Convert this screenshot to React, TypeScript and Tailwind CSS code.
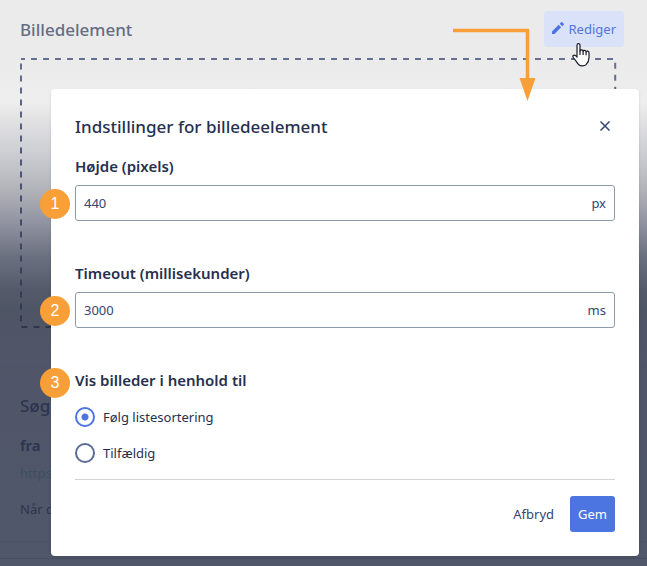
import type { ReactNode } from "react";

function Field({ id, label, value, unit, step }: { id: string; label: string; value: string; unit: string; step: string }) {
  return (
    <div className="relative">
      <label htmlFor={id} className="block text-[15px] font-semibold leading-6">
        {label}
      </label>
      <div className="mt-[7px] flex h-9 items-center rounded-[3px] border border-[#8c9bab] px-2 pt-0.5 text-[13px] text-[#344571]">
        <input id={id} defaultValue={value} className="min-w-0 flex-1 bg-transparent outline-none" />
        <span>{unit}</span>
      </div>
      <Step className="top-[35px]">{step}</Step>
    </div>
  );
}

function Step({ children, className }: { children: ReactNode; className: string }) {
  return (
    <span className={`absolute -left-[35px] flex size-[30px] items-center justify-center rounded-full bg-[#f99f38] font-['Liberation_Sans',sans-serif] text-[16px] font-normal leading-none text-white ${className}`}>
      {children}
    </span>
  );
}

function Choice({ label, checked }: { label: string; checked?: boolean }) {
  return (
    <label className="flex h-9 items-center gap-2 text-[13px]">
      <input
        type="radio"
        name="order"
        defaultChecked={checked}
        className="size-5 appearance-none rounded-full border-2 border-[#5b6c93] checked:border-[#4d75e1] checked:bg-[radial-gradient(circle,#4d75e1_0_3px,transparent_4px)]"
      />
      <span className="pt-0.5">{label}</span>
    </label>
  );
}

export default function App() {
  return (
    <main className="relative min-h-screen overflow-hidden bg-[#50576a] bg-[linear-gradient(#ebebeb_0px,#ebebeb_60px,#eeeeee_102px,#e0e0e2_123px,#cacbd0_157px,#b2b3b9_190px,#9093a0_223px,#6b7080_257px,#545a6a_290px,#4e5565_310px,#505668_350px,#50576a_100%)] font-['Noto_Sans',sans-serif] text-[#26304f]">
      <div className="pl-5 pr-[23px] pt-[11px]">
        <div className="flex h-9 items-center justify-between">
          <h1 className="pt-0.5 text-[17px] font-medium text-[#666d82]">Billedelement</h1>
          <button className="flex h-9 items-center gap-[5px] rounded bg-[#dae2f9] px-2 text-[13px] text-[#4d75e1]">
            <svg viewBox="2 2 20 20" className="mb-0.5 size-3" fill="currentColor">
              <path d="M2 17.800V22h4.200L17.300 10.900 13.100 6.700 2 17.800ZM21.600 6.600a1.200 1.200 0 0 0 0-1.700l-2.500-2.500a1.200 1.200 0 0 0-1.700 0l-2.500 2.500 4.200 4.200 2.500-2.500Z" />
            </svg>
            <span className="pt-0.5">Rediger</span>
          </button>
        </div>
        <div className="mr-2 mt-[11px] h-[270px]">
          <svg className="size-full overflow-visible" fill="none">
            <defs>
              <linearGradient id="dash" x1="0" y1="0" x2="0" y2="270" gradientUnits="userSpaceOnUse">
                <stop stopColor="#66708f" />
                <stop offset=".5" stopColor="#46506f" />
                <stop offset="1" stopColor="#2f364c" />
              </linearGradient>
            </defs>
            <rect x="1" y="1" width="99.700%" height="268" stroke="url(#dash)" strokeWidth="2" strokeDasharray="6 6" strokeDashoffset="2" />
          </svg>
        </div>
      </div>
      <section className="mt-[38px] border-y border-[#4c5366] pb-5 pl-5 text-[#2c3450]">
        <h2 className="pt-[27px] text-[17px] font-medium leading-6">Søg</h2>
        <h3 className="mt-[15px] text-[15px] font-semibold leading-6">fra</h3>
        <p className="mt-1 text-[13px] leading-6 text-[#3c515e]">https://</p>
        <p className="mt-3 text-[13px] leading-6">Når der</p>
      </section>
      <hr className="mt-4 border-[#484f62]" />

      <div role="dialog" aria-labelledby="title" className="absolute left-[51px] right-2 top-[89px] rounded bg-white px-6 pb-6 pt-[25px] shadow-sm">
        <header className="flex h-6 items-center justify-between">
          <h2 id="title" className="pt-0.5 text-[17px] font-medium">Indstillinger for billedeelement</h2>
          <button aria-label="Luk" className="flex size-5 items-center justify-center text-[#344571]">
            <svg viewBox="0 0 10 10" className="size-[10px]" fill="none" stroke="currentColor" strokeWidth="1.500">
              <path d="m.5.5 9 9m0-9-9 9" />
            </svg>
          </button>
        </header>
        <div className="mt-4 flex flex-col gap-10">
          <Field id="height" label="Højde (pixels)" value="440" unit="px" step="1" />
          <Field id="timeout" label="Timeout (millisekunder)" value="3000" unit="ms" step="2" />
          <div role="radiogroup" aria-labelledby="order-label" className="relative">
            <h3 id="order-label" className="text-[15px] font-semibold leading-6">Vis billeder i henhold til</h3>
            <Step className="top-0">3</Step>
            <div className="mt-[7px]">
              <Choice label="Følg listesortering" checked />
              <Choice label="Tilfældig" />
            </div>
          </div>
        </div>
        <footer className="mt-2 flex justify-end gap-2 border-t border-[#d3d3d3] pt-4 text-[13px]">
          <button className="h-9 px-2 pt-0.5 text-[#344571]">Afbryd</button>
          <button className="h-9 rounded-[3px] bg-[#4d75e1] px-2 pt-0.5 text-white">Gem</button>
        </footer>
      </div>

      <svg className="absolute right-[104px] top-7 h-[74px] w-[90px]" viewBox="0 0 90 74" fill="none">
        <path d="M0 2.500H74.500V51" stroke="#f99f38" strokeWidth="3.500" />
        <path d="M66.500 50h16l-8 23Z" fill="#f99f38" />
      </svg>
      <svg className="absolute right-[57px] top-[43px] h-6 w-[18px]" viewBox="0 0 18 24" fill="white" stroke="#171c2b" strokeWidth="1.200" strokeLinejoin="round">
        <path d="M5 13V2.200c0-2 3-2 3 0V8c.2-1.700 3.100-1.400 3.100.3.200-1.500 3-1.200 3 .5.400-1.200 2.900-.9 2.900.9v5c0 3.300-1.400 5.300-2.900 6.900-1.700 1.700-5.500 1.700-7.200.2C5 20 4 17.500 1.500 14.800c-1.500-1.900.3-3.400 1.800-2.400L5 14Z" />
        <path d="M8 7.500V12m3.100-3.700V12m3-3v3.300" />
      </svg>
    </main>
  );
}
